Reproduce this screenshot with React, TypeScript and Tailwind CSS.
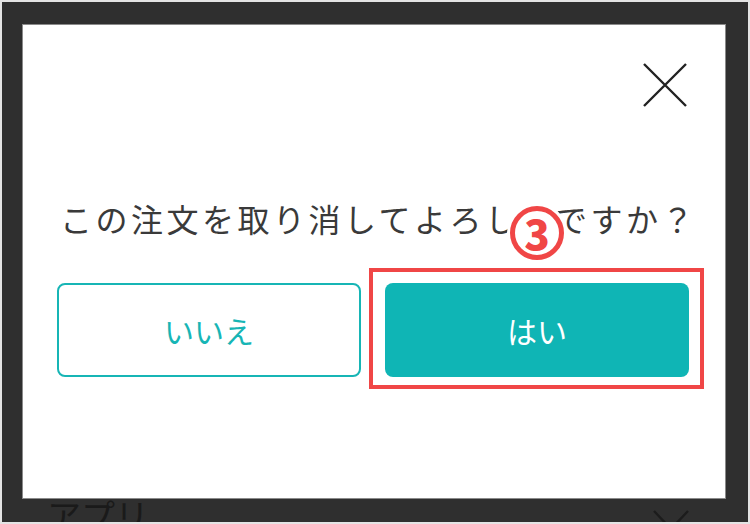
const font = { fontFamily: '"Noto Sans CJK JP", "Noto Sans", sans-serif' };

const CloseIcon = () => (
  <svg width="46" height="46" viewBox="0 0 46 46" fill="none" stroke="#222" strokeWidth="2.4">
    <path d="M2 2 L44 44 M44 2 L2 44" />
  </svg>
);

const StepBadge = () => (
  <div className="absolute left-[484px] top-[178px] w-[60px] h-[60px] rounded-full bg-white flex items-center justify-center">
    <div className="shrink-0 w-[54px] h-[54px] rounded-full border-[5px] border-[#f04646] flex items-center justify-center">
      <span className="text-[42px] font-black leading-none text-[#f04646] -mt-[3px]" style={font}>3</span>
    </div>
  </div>
);

export default function App() {
  return (
    <div className="w-[750px] h-[524px] border-2 border-[#e4e4e4] bg-[#2f2f2f] overflow-hidden" style={font}>
      {/* modal */}
      <div className="relative ml-[20px] mt-[22px] w-[704px] h-[475px] bg-white border border-[#8a8a8a]">
        <div className="flex justify-end pt-[37px] pr-[37px]">
          <CloseIcon />
        </div>

        <p className="mt-[90px] pl-[37px] text-[32px] leading-[40px] tracking-[3.5px] text-[#3a3a3a] whitespace-nowrap">
          この注文を取り消してよろしいですか？
        </p>

        <div className="flex gap-[24px] mt-[45px] pl-[34px]">
          <button className="w-[304px] h-[94px] rounded-[8px] border-2 border-[#17b5b5] bg-white text-[30px] text-[#17b5b5] flex items-center justify-center">
            いいえ
          </button>
          <button className="w-[304px] h-[94px] rounded-[8px] bg-[#0fb5b5] text-[30px] text-white flex items-center justify-center">
            はい
          </button>
        </div>

        {/* annotation */}
        <div className="absolute left-[346px] top-[243px] w-[335px] h-[121px] border-[4px] border-[#f04646]" />
        <StepBadge />
      </div>

      {/* page behind the modal */}
      <div className="flex items-start justify-between pl-[45px] pr-[58px] -mt-[4px]">
        <span className="text-[34px] leading-[40px] text-[#1a1a1a]">アプリ</span>
        <svg width="38" height="22" viewBox="0 0 38 22" fill="none" stroke="#1c1c1c" strokeWidth="2.4" className="mt-[14px]">
          <path d="M2 2 L19 20 L36 2" />
        </svg>
      </div>
    </div>
  );
}
